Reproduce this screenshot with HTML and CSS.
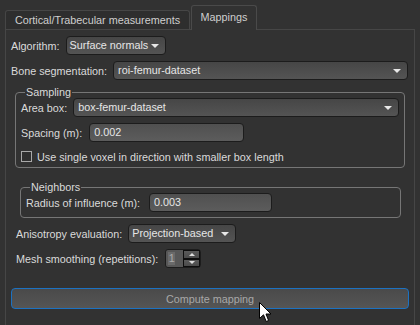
FILE: index.html
```html
<!DOCTYPE html>
<html lang="en">
<head>
    <meta charset="UTF-8" />
    <title>Mappings</title>
    <link rel="stylesheet" href="styles.css">
</head>
<body>

<div class="tabs">
    <div class="tab">Cortical/Trabecular measurements</div>
    <div class="tab active">Mappings</div>
</div>

<div class="pane">
    <div class="row row-first">
        <span class="label">Algorithm:</span>
        <div class="combo combo-algo">Surface normals <span class="arrow"></span></div>
    </div>

    <div class="row">
        <span class="label">Bone segmentation:</span>
        <div class="combo grow">roi-femur-dataset <span class="arrow"></span></div>
    </div>

    <div class="group group-sampling">
        <div class="group-title">Sampling</div>
        <div class="row row-tight">
            <span class="label">Area box:</span>
            <div class="combo grow">box-femur-dataset <span class="arrow"></span></div>
        </div>
        <div class="row">
            <span class="label">Spacing (m):</span>
            <div class="field field-spacing">0.002</div>
        </div>
        <div class="row row-check">
            <span class="checkbox"></span>
            <span class="label">Use single voxel in direction with smaller box length</span>
        </div>
    </div>

    <div class="group group-neighbors">
        <div class="group-title">Neighbors</div>
        <div class="row row-tight">
            <span class="label">Radius of influence (m):</span>
            <div class="field field-radius">0.003</div>
        </div>
    </div>

    <div class="row row-indent">
        <span class="label">Anisotropy evaluation:</span>
        <div class="combo combo-aniso">Projection-based <span class="arrow"></span></div>
    </div>

    <div class="row row-indent">
        <span class="label">Mesh smoothing (repetitions):</span>
        <div class="spin">
            <div class="spin-value"><span class="spin-sel">1</span></div>
            <div class="spin-buttons">
                <span class="spin-btn"><span class="tri-up"></span></span>
                <span class="spin-btn"><span class="tri-down"></span></span>
            </div>
        </div>
    </div>

    <button class="compute">Compute mapping</button>
</div>

<svg class="cursor" width="13" height="21" viewBox="0 0 13 21">
    <path d="M0.5 0.5 L0.5 16.5 L4.5 12.8 L7.2 19.5 L9.6 18.5 L7 12 L12 12 Z" fill="#fff" stroke="#000" stroke-width="1"/>
</svg>

</body>
</html>
```

FILE: styles.css
```css
:root {
    --bg: #323232;
    --text: #dadada;
    --input-border: #1c1c1c;
    --group-border: #767676;
}

html, body {
    margin: 0;
    height: 100%;
    overflow: hidden;
}

body {
    background: var(--bg);
    color: var(--text);
    font-family: 'Liberation Sans', Arial, sans-serif;
    font-size: 10.8px;
    position: relative;
    white-space: nowrap;
}

/* tabs */
.tabs {
    display: flex;
    align-items: flex-end;
    padding: 5px 0 0 5px;
    height: 24px;
}

.tab {
    width: 185px;
    height: 19px;
    line-height: 19px;
    box-sizing: border-box;
    text-align: center;
    background: #2e2e2e;
    border: 1px solid #464646;
    border-bottom: none;
    border-radius: 3px 3px 0 0;
    color: #cfcfcf;
}

.tab.active {
    width: 66px;
    height: 25px;
    line-height: 23px;
    background: var(--bg);
    border-color: #4a4a4a;
    margin-left: 1px;
    margin-bottom: -1px;
    position: relative;
    z-index: 1;
}

.pane {
    margin: 0 5px;
    border: 1px solid #464646;
    border-bottom: none;
    height: 296px;
    box-sizing: border-box;
}

/* rows */
.row {
    display: flex;
    align-items: center;
    gap: 6px;
    height: 19px;
    margin-top: 6px;
    padding: 0 6px 0 5px;
}

.row-indent {
    padding-left: 10px;
}

.row-tight {
    margin-top: 0;
}

.combo, .field {
    height: 19px;
    line-height: 17px;
    box-sizing: border-box;
    border: 1px solid var(--input-border);
    border-radius: 4px;
    background: linear-gradient(#464646, #545454);
    padding: 0 4px;
    position: relative;
    color: #e6e6e6;
}

.combo {
    padding-right: 16px;
}

.grow {
    flex: 1;
}

.combo-algo {
    width: 100px;
    padding-left: 3px;
}

.combo-aniso {
    width: 108px;
    padding-left: 3px;
}

.field {
    background: linear-gradient(#505050, #5c5c5c);
}

.field-spacing {
    width: 155px;
    margin-left: 1px;
}

.field-radius {
    width: 123px;
    margin-left: 3px;
}

.arrow {
    position: absolute;
    right: 6px;
    top: 7px;
    width: 0;
    height: 0;
    border-left: 4px solid transparent;
    border-right: 4px solid transparent;
    border-top: 4px solid #e8e8e8;
}

/* group boxes */
.group {
    border: 1px solid var(--group-border);
    border-radius: 4px;
}

.group-title {
    display: table;
    line-height: 12px;
    margin: -7px 0 0 9px;
    padding: 0 1px;
    background: var(--bg);
}

.group .row {
    padding-left: 5px;
    padding-right: 5px;
}

.group-sampling {
    margin: 12px 9px 0 9px;
    padding-bottom: 2px;
}

.group-neighbors {
    margin: 19px 13px 0 14px;
    padding-bottom: 5px;
}

.row-check {
    height: 17px;
    gap: 5px;
}

.checkbox {
    width: 11px;
    height: 11px;
    box-sizing: border-box;
    border: 1px solid #a8a8a8;
    background: #2f2f2f;
}

/* spin box */
.spin {
    display: flex;
    width: 36px;
    height: 19px;
    border: 1px solid var(--input-border);
    border-radius: 3px;
    box-sizing: border-box;
    background: #575757;
    margin-left: 1px;
}

.spin-value {
    flex: 1;
    padding: 2px 0 0 2px;
}

.spin-sel {
    display: inline-block;
    width: 7px;
    height: 13px;
    line-height: 13px;
    background: #6a6a6a;
    color: #aaa;
    text-align: center;
}

.spin-buttons {
    display: flex;
    flex-direction: column;
    width: 17px;
}

.spin-btn {
    flex: 1;
    border: 1px solid #0d0d0d;
    background: linear-gradient(#5a5a5a, #4a4a4a);
    display: flex;
    align-items: center;
    justify-content: center;
}

.tri-up, .tri-down {
    width: 0;
    height: 0;
    border-left: 3px solid transparent;
    border-right: 3px solid transparent;
}

.tri-up {
    border-bottom: 3px solid #ddd;
}

.tri-down {
    border-top: 3px solid #ddd;
}

/* button */
.compute {
    display: block;
    width: calc(100% - 10px);
    height: 21px;
    margin: 20px 5px 0 5px;
    border: 1px solid #1c72c2;
    border-radius: 4px;
    background: linear-gradient(#4a4a4a, #555);
    color: #a8a8a8;
    font-family: inherit;
    font-size: 10.8px;
    padding: 0;
}

.cursor {
    position: absolute;
    left: 259px;
    top: 302px;
}
```
